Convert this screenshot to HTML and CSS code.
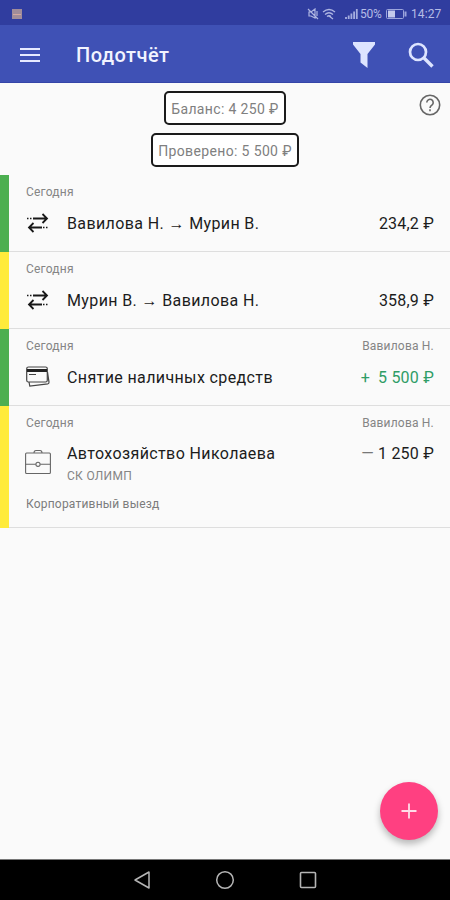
FILE: index.html
```html
<!DOCTYPE html>
<html lang="ru">
<head>
<meta charset="utf-8">
<title>Подотчёт</title>
<link rel="stylesheet" href="styles.css">
</head>
<body>
<div class="statusbar">
  <svg class="notice" width="10" height="10" viewBox="0 0 10 10"><path fill="#a08c9a" d="M0 0h10v10H0z"/><path stroke="#d3a8a0" d="M1 5.5h8"/></svg>
  <div class="indicators">
    <svg width="13" height="12" viewBox="0 0 13 12" fill="none" stroke="#aeb5e2" stroke-width="1.2"><path d="M2 4h2l4-3v9L4 8H2zM1 1l10 10M10 3v5"/></svg>
    <svg class="wifi" width="14" height="12" viewBox="0 0 14 12" fill="none" stroke="#aeb5e2" stroke-width="1.3"><path d="M1 4q6-5 12 0M3 6.5q4-3.500 8 0M5 8.500q2-1.500 4 0M7 8l4 3"/></svg>
    <svg class="signal" width="13" height="12" viewBox="0 0 13 12" fill="none" stroke="#a5addf" stroke-width="1.8"><path d="M1 11V9M3.700 11V7.500M6.400 11V5.500M9.100 11V3.500M11.800 11V1"/></svg>
    <span class="percent">50%</span>
    <svg class="battery" width="21" height="10" viewBox="0 0 21 10" fill="none" stroke="#9ca5dc"><rect x=".5" y=".5" width="17" height="9" rx="1"/><path fill="#c4caec" stroke="none" d="M2 1.500h7v7H2z"/><path stroke-width="2" d="M19.500 2.500v5"/></svg>
    <span class="clock">14:27</span>
  </div>
</div>
<header class="appbar">
  <svg width="20" height="16" viewBox="0 0 20 16" stroke="#e6eaff" stroke-width="2"><path d="M0 2h20M0 8h20M0 14h20"/></svg>
  <h1>Подотчёт</h1>
  <svg class="filter" width="24" height="26" viewBox="0 0 24 26" fill="#dde4ff"><path d="M1 0h22v2.500L15.500 12v14L8.500 20.500V12L1 2.500z"/></svg>
  <svg class="search" width="26" height="26" viewBox="0 0 26 26" fill="none" stroke="#dde4ff" stroke-width="2.700"><circle cx="10" cy="10" r="8"/><path stroke-width="3.300" d="M16 16l8.500 8.500"/></svg>
</header>
<main>
  <section class="totals">
    <div class="total">Баланс: 4 250 ₽</div>
    <div class="total checked">Проверено: 5 500 ₽</div>
    <svg class="help" width="22" height="22" viewBox="0 0 22 22" fill="none" stroke="#666" stroke-width="1.600"><circle cx="11" cy="11" r="9.700"/><path d="M7.800 8.500a3.200 3.200 0 1 1 5.300 2.400q-2.100 1.500-2.100 3.100M11 15.300v2"/></svg>
  </section>
  <article class="row green">
    <div class="meta"><span>Сегодня</span></div>
    <div class="line">
      <svg class="icon" width="26" height="24" viewBox="0 0 26 24" fill="none" stroke="#181818" stroke-width="1.800"><path d="M8 7.500h14M17.500 3L22 7.500 17.500 12M17 16.500H4M8.500 12L4 16.500 8.500 21"/><path stroke-width="1.500" stroke-dasharray="1.500 1.500" d="M2 7.500h6M18 16.500h6"/></svg>
      <span class="title">Вавилова Н. → Мурин В.</span><span class="amount">234,2 ₽</span>
    </div>
  </article>
  <article class="row yellow">
    <div class="meta"><span>Сегодня</span></div>
    <div class="line">
      <svg class="icon" width="26" height="24" viewBox="0 0 26 24" fill="none" stroke="#181818" stroke-width="1.800"><path d="M8 7.500h14M17.500 3L22 7.500 17.500 12M17 16.500H4M8.500 12L4 16.500 8.500 21"/><path stroke-width="1.500" stroke-dasharray="1.500 1.500" d="M2 7.500h6M18 16.500h6"/></svg>
      <span class="title">Мурин В. → Вавилова Н.</span><span class="amount">358,9 ₽</span>
    </div>
  </article>
  <article class="row green">
    <div class="meta"><span>Сегодня</span><span class="person">Вавилова Н.</span></div>
    <div class="line">
      <svg class="icon" width="26" height="24" viewBox="0 0 26 24" fill="none" stroke="#444" stroke-width="1.200"><rect x="1.700" y="2" width="20.600" height="15" rx="1.800"/><path stroke="#222" stroke-width="3" d="M2 5.500h20"/><path d="M4 9.500h7M4 17l.8 4.200 18-2.400q1.400-.3 1.200-1.700L22.500 7"/></svg>
      <span class="title">Снятие наличных средств</span><span class="amount income"><i>+</i>5 500 ₽</span>
    </div>
  </article>
  <article class="row yellow expense">
    <div class="meta"><span>Сегодня</span><span class="person">Вавилова Н.</span></div>
    <div class="line">
      <svg class="icon case" width="26" height="26" viewBox="0 0 26 26" fill="none" stroke="#666" stroke-width="1.100"><rect x=".6" y="4" width="24.800" height="20.500" rx="1"/><path d="M9 4q0-2.500 2-2.500h4q2 0 2 2.500M.6 15.300h10.200M15.200 15.300h10.200"/><circle cx="13" cy="15.300" r="2.100"/></svg>
      <div class="details"><span class="title">Автохозяйство Николаева</span><span class="company">СК ОЛИМП</span></div>
      <span class="amount"><i>—</i>1 250 ₽</span>
    </div>
    <div class="comment">Корпоративный выезд</div>
  </article>
  <button class="fab" aria-label="Добавить"><svg width="16" height="16" viewBox="0 0 16 16" stroke="#ffdce8" stroke-width="1.800"><path d="M8 .5v15M.5 8h15"/></svg></button>
</main>
<nav class="navbar">
  <svg width="18" height="20" viewBox="0 0 18 20" fill="none" stroke="#b5b5b5" stroke-width="1.500" stroke-linejoin="round"><path d="M16 2v16L2 10z"/></svg>
  <svg width="20" height="20" viewBox="0 0 20 20" fill="none" stroke="#b5b5b5" stroke-width="1.500"><circle cx="10" cy="10" r="8.300"/></svg>
  <svg width="18" height="18" viewBox="0 0 18 18" fill="none" stroke="#b5b5b5" stroke-width="1.600"><rect x="1.500" y="1.500" width="15" height="15" rx="1"/></svg>
</nav>
</body>
</html>
```
FILE: styles.css
```css
* { box-sizing: border-box; }
body {
  margin: 0;
  height: 900px;
  display: flex;
  flex-direction: column;
  overflow: hidden;
  background: #fafafa;
  font-family: Roboto, sans-serif;
  color: #1c1c1c;
}
svg { display: block; flex: none; }
.statusbar {
  height: 25px;
  flex: none;
  display: flex;
  align-items: center;
  justify-content: space-between;
  padding: 2px 8px 0 12px;
  background: #303d9f;
  color: #b5bce6;
  font-size: 12px;
}
.indicators { display: flex; align-items: center; }
.wifi { margin-left: 2px; }
.signal { margin: 0 2px 0 9px; }
.percent { width: 24px; letter-spacing: -.2px; }
.battery { margin: 0 4px 0 2px; }
.clock { width: 31px; letter-spacing: .1px; white-space: nowrap; }
.appbar {
  height: 58px;
  flex: none;
  display: flex;
  align-items: center;
  padding: 3px 16px 0 20px;
  background: #3f51b5;
  border-bottom: 1px solid #3545a8;
}
.appbar h1 {
  flex: 1;
  margin: 0 0 0 36px;
  font-size: 20px;
  font-weight: 500;
  letter-spacing: .45px;
  color: #f1f3ff;
}
.filter { margin-right: 1px; }
.search { margin-left: 31px; }
main { flex: 1; position: relative; }
.totals {
  height: 92px;
  padding-top: 8px;
  display: flex;
  flex-direction: column;
  align-items: center;
  gap: 8px;
}
.total {
  width: 122px;
  height: 34px;
  border: 2px solid #1b1b1b;
  border-radius: 5px;
  background: #fff;
  color: #808080;
  font-size: 14px;
  line-height: 32px;
  letter-spacing: .36px;
  text-align: center;
  white-space: nowrap;
}
.checked { width: 148px; }
.help { position: absolute; right: 9px; top: 11px; }
.row {
  height: 77px;
  padding: 10px 16px 0 17px;
  border-left: 9px solid;
  position: relative;
  box-shadow: inset 0 -1px #dedede;
}
.green { border-color: #4caf50; }
.yellow { border-color: #ffeb3b; }
.expense { height: 122px; }
.totals + .row { height: 77px; }
.meta {
  display: flex;
  justify-content: space-between;
  height: 14px;
  line-height: 14px;
  font-size: 12px;
  letter-spacing: .2px;
  color: #858585;
}
.line { display: flex; align-items: flex-start; padding-top: 12px; }
.icon { margin: 0 16px 0 -1px; }
.case { margin-top: 8px; }
.title, .amount { font-size: 16px; line-height: 26px; white-space: nowrap; }
.title { letter-spacing: .38px; }
.amount { margin-left: auto; letter-spacing: .2px; }
.amount i { font-style: normal; margin-right: 8px; }
.income { color: #2f9d66; }
.expense .line { padding-top: 11px; }
.expense .amount i { color: #777; margin-right: 4px; }
.details { display: flex; flex-direction: column; }
.company { font-size: 12px; line-height: 19px; letter-spacing: .3px; color: #858585; }
.comment { margin-top: 11px; font-size: 12px; line-height: 14px; letter-spacing: .2px; color: #7c7c7c; }
.fab {
  position: absolute;
  right: 12px;
  bottom: 19px;
  width: 58px;
  height: 58px;
  padding: 0;
  border: 0;
  border-radius: 50%;
  display: grid;
  place-items: center;
  background: #ff4081;
  box-shadow: 0 4px 7px rgba(0, 0, 0, .27);
}
.navbar {
  height: 41px;
  flex: none;
  display: flex;
  align-items: center;
  justify-content: center;
  gap: 64px;
  background: #000;
  border-top: 1px solid #777;
}
```
